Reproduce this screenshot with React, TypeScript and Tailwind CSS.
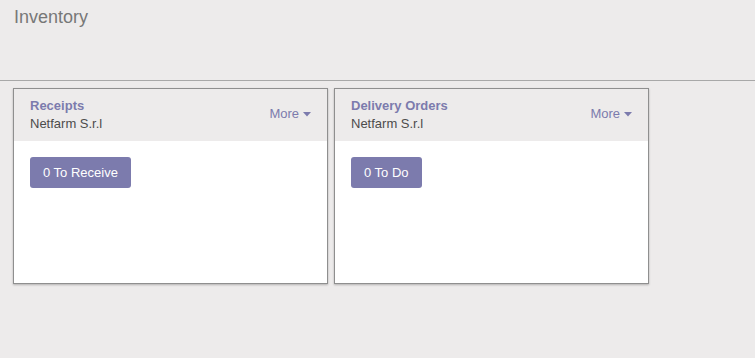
import { ChevronDown } from 'lucide-react';

type Card = { title: string; company: string; action: string };

const cards: Card[] = [
  { title: 'Receipts', company: 'Netfarm S.r.l', action: '0 To Receive' },
  { title: 'Delivery Orders', company: 'Netfarm S.r.l', action: '0 To Do' },
];

function Caret() {
  return (
    <svg width="8" height="5" viewBox="0 0 8 5" className="ml-[4px]">
      <path d="M0 0 L8 0 L4 4.5 Z" fill="#7c7bad" />
    </svg>
  );
}

function DashboardCard({ card }: { card: Card }) {
  return (
    <div className="w-[315px] h-[196px] border border-[#8f8f8f] bg-white shadow-[0_1px_2px_rgba(0,0,0,0.25)] flex flex-col">
      <div className="h-[52px] bg-[#edebeb] flex justify-between pl-[16px] pr-[16px] pt-[9px]">
        <div className="flex flex-col">
          <span className="text-[13px] leading-[16px] font-bold text-[#7c7bad]">{card.title}</span>
          <span className="text-[13px] leading-[19px] text-[#4c4c4c]">{card.company}</span>
        </div>
        <div className="flex items-center h-[16px] mt-[8px] text-[13px] text-[#7c7bad]">
          More
          <Caret />
        </div>
      </div>
      <div className="pl-[16px] pt-[16px]">
        <button className="h-[31px] px-[13px] rounded-[3px] bg-[#7c7bad] text-white text-[13px]">
          {card.action}
        </button>
      </div>
    </div>
  );
}

export default function App() {
  void ChevronDown;
  return (
    <div className="w-[755px] h-[358px] bg-[#edebeb] font-['Liberation_Sans',Arial,sans-serif]">
      <div className="h-[81px] border-b border-[#a8a8a8] pl-[14px] pt-[6px]">
        <span className="text-[18px] leading-[22px] text-[#777777]">Inventory</span>
      </div>
      <div className="flex gap-[6px] pl-[13px] pt-[7px]">
        {cards.map((c) => (
          <DashboardCard key={c.title} card={c} />
        ))}
      </div>
    </div>
  );
}
